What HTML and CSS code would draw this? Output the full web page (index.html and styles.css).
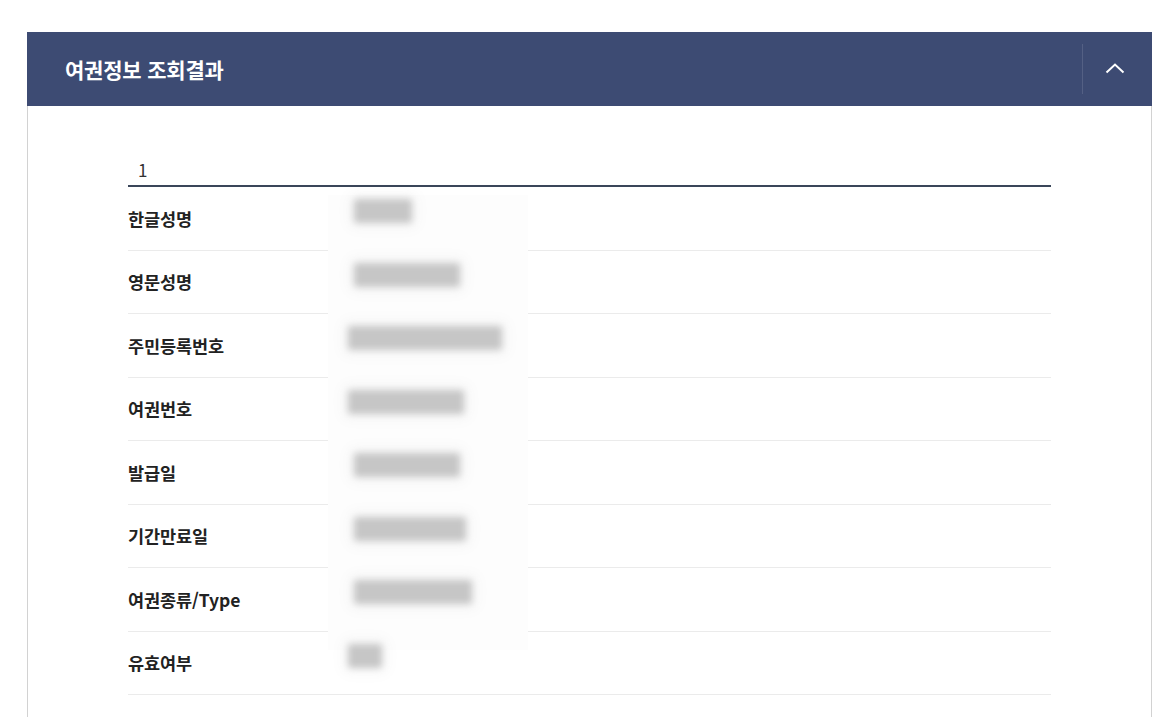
FILE: index.html
```html
<!DOCTYPE html>
<html lang="ko">
<head>
<meta charset="utf-8">
<title>여권정보 조회결과</title>
<link rel="stylesheet" href="styles.css">
</head>
<body>
<section class="panel">
  <header class="panel-head">
    <h2 class="panel-title">여권정보 조회결과</h2>
    <button class="toggle" type="button" aria-label="접기">
      <svg width="20" height="12" viewBox="0 0 20 12" aria-hidden="true"><polyline points="1.5,10.5 10,2.5 18.5,10.5" fill="none" stroke="#fff" stroke-width="2"/></svg>
    </button>
  </header>
  <div class="panel-body">
    <div class="list">
      <div class="mask"></div>
      <div class="num">1</div>
      <dl class="rows">
        <div class="row"><dt>한글성명</dt><dd><span class="blur" style="width:58px"></span></dd></div>
        <div class="row"><dt>영문성명</dt><dd><span class="blur" style="width:106px"></span></dd></div>
        <div class="row"><dt>주민등록번호</dt><dd><span class="blur shift" style="width:154px"></span></dd></div>
        <div class="row"><dt>여권번호</dt><dd><span class="blur shift" style="width:116px"></span></dd></div>
        <div class="row"><dt>발급일</dt><dd><span class="blur" style="width:106px"></span></dd></div>
        <div class="row"><dt>기간만료일</dt><dd><span class="blur" style="width:112px"></span></dd></div>
        <div class="row"><dt>여권종류/Type</dt><dd><span class="blur" style="width:118px"></span></dd></div>
        <div class="row"><dt>유효여부</dt><dd><span class="blur shift" style="width:34px"></span></dd></div>
      </dl>
    </div>
  </div>
</section>
</body>
</html>
```

FILE: styles.css
```css
html, body {
  margin: 0;
  padding: 0;
  background: #fff;
}
body {
  padding: 32px 0 0 27px;
  font-family: "Noto Sans CJK KR", "Noto Sans", sans-serif;
  color: #222;
}
.panel {
  width: 1125px;
  box-sizing: border-box;
  border-left: 1px solid #d2d2d2;
  border-right: 1px solid #d2d2d2;
}
.panel-head {
  height: 74px;
  margin: 0 -1px;
  background: #3d4b73;
  display: flex;
  align-items: center;
  justify-content: space-between;
}
.panel-title {
  margin: 0 0 0 38px;
  font-size: 21px;
  font-weight: 700;
  color: #fff;
  letter-spacing: -0.2px;
}
.toggle {
  width: 70px;
  height: 50px;
  border: 0;
  border-left: 1px solid rgba(255, 255, 255, 0.12);
  background: transparent;
  padding: 0 6px 0 0;
  display: flex;
  align-items: center;
  justify-content: center;
  cursor: pointer;
}
.toggle svg {
  display: block;
  margin-top: -2px;
}
.panel-body {
  padding: 44px 100px 40px;
}
.list {
  position: relative;
}
.mask {
  position: absolute;
  left: 200px;
  top: 45px;
  width: 200px;
  height: 455px;
  background: #fdfdfd;
  z-index: 1;
}
.num {
  padding: 8px 0 3px 10px;
  line-height: 24px;
  font-size: 17px;
  color: #333;
  border-bottom: 2px solid #3a4659;
}
.rows {
  margin: 0;
}
.row {
  height: 63.5px;
  box-sizing: border-box;
  border-bottom: 1px solid #ebebeb;
  display: flex;
  align-items: center;
}
.row dt {
  width: 226px;
  font-size: 17.5px;
  font-weight: 700;
  color: #222;
  letter-spacing: -0.1px;
}
.row dd {
  margin: 0 0 14px;
  position: relative;
  z-index: 2;
  display: flex;
}
.blur {
  display: block;
  height: 24px;
  background: #c6c6c6;
  border-radius: 3px;
  filter: blur(3.5px);
  box-shadow: 0 0 12px 8px rgba(0, 0, 0, 0.025);
}
.blur.shift {
  margin-left: -6px;
}
```
